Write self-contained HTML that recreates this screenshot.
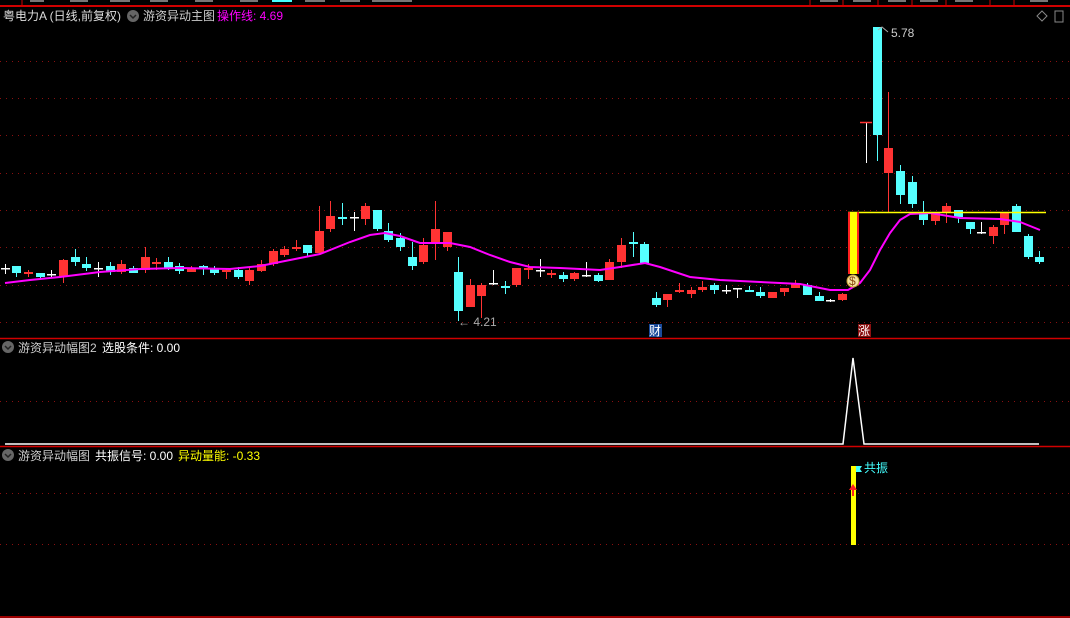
<!DOCTYPE html>
<html><head><meta charset="utf-8">
<style>
html,body{margin:0;padding:0;background:#000;width:1070px;height:618px;overflow:hidden}
svg{display:block}
text{font-family:"Liberation Sans","Noto Sans CJK SC",sans-serif;font-size:12px}
</style></head><body>
<svg id="s" width="1070" height="618" xmlns="http://www.w3.org/2000/svg">
<rect width="1070" height="618" fill="#000"/>
<g stroke="#8a1010" stroke-width="1" stroke-dasharray="1,5">
<line x1="0" y1="61.5" x2="1070" y2="61.5"/><line x1="0" y1="98.5" x2="1070" y2="98.5"/>
<line x1="0" y1="135.5" x2="1070" y2="135.5"/><line x1="0" y1="173.5" x2="1070" y2="173.5"/>
<line x1="0" y1="210.5" x2="1070" y2="210.5"/><line x1="0" y1="247.5" x2="1070" y2="247.5"/>
<line x1="0" y1="285.5" x2="1070" y2="285.5"/><line x1="0" y1="322.5" x2="1070" y2="322.5"/>
<line x1="0" y1="401.5" x2="1070" y2="401.5"/>
<line x1="0" y1="493.5" x2="1070" y2="493.5"/><line x1="0" y1="544.5" x2="1070" y2="544.5"/>
</g>
<line x1="0" y1="6" x2="1070" y2="6" stroke="#d00000" stroke-width="2"/>
<line x1="22" y1="0" x2="22" y2="6" stroke="#d00000"/>
<g stroke="#d00000"><line x1="810" y1="0" x2="810" y2="6"/><line x1="843" y1="0" x2="843" y2="6"/><line x1="878" y1="0" x2="878" y2="6"/><line x1="912" y1="0" x2="912" y2="6"/><line x1="946" y1="0" x2="946" y2="6"/><line x1="990" y1="0" x2="990" y2="6"/><line x1="1014" y1="0" x2="1014" y2="6"/></g>
<g fill="#777"><rect x="30" y="0" width="14" height="2"/><rect x="70" y="0" width="18" height="2"/><rect x="110" y="0" width="20" height="2"/><rect x="150" y="0" width="18" height="2"/><rect x="195" y="0" width="18" height="2"/><rect x="240" y="0" width="18" height="2"/><rect x="305" y="0" width="20" height="2"/><rect x="340" y="0" width="20" height="2"/><rect x="372" y="0" width="40" height="2"/><rect x="820" y="0" width="18" height="2"/><rect x="853" y="0" width="18" height="2"/><rect x="888" y="0" width="18" height="2"/><rect x="920" y="0" width="18" height="2"/><rect x="955" y="0" width="18" height="2"/><rect x="1030" y="0" width="18" height="2"/></g>
<rect x="272" y="0" width="20" height="2" fill="#4ff"/>
<text x="3" y="20" fill="#ddd">粤电力A (日线,前复权)</text>
<circle cx="133" cy="16" r="6" fill="#666"/><path d="M130 15l3 3 3-3" stroke="#222" fill="none" stroke-width="1.5"/>
<text x="143" y="20" fill="#ccc">游资异动主图</text>
<text x="217" y="20" fill="#ff00ff">操作线: 4.69</text>
<path d="M1042 11l5 5-5 5-5-5z" stroke="#888" fill="none"/>
<rect x="1055" y="11" width="8" height="11" stroke="#888" fill="none"/>
<g id="c"></g>
<polyline fill="none" stroke="#ff00ff" stroke-width="2" points="5,283 30,280 60,277 100,272 140,269 180,268 230,269 260,266 290,260 320,254 350,242 370,235 385,233 400,236 420,243 450,243 470,247 490,255 510,262 530,267 560,268 600,270 620,267 645,263 660,267 690,277 720,280 760,282 800,284 830,290 848,290 860,283 870,270 880,250 890,233 900,220 910,214 930,213 960,218 1000,219 1020,222 1040,230"/>
<line x1="848" y1="212.5" x2="1046" y2="212.5" stroke="#ffff00" stroke-width="1.5"/>
<rect x="848" y="212" width="11" height="62" fill="#ff2020"/><rect x="850" y="212" width="7" height="62" fill="#ffff00"/>
<circle cx="853" cy="281" r="6" fill="#f4e3a0" stroke="#c8a030"/><text x="849" y="285" font-size="9" fill="#8a4a10">$</text>
<text x="458" y="326" fill="#aaa">← 4.21</text>
<text x="891" y="37" fill="#ccc">5.78</text><path d="M878 30l4-3 6 5" stroke="#aaa" fill="none"/>
<rect x="649" y="324" width="13" height="13" fill="#1a4a9a"/><text x="649" y="335" fill="#fff">财</text>
<rect x="858" y="324" width="13" height="13" fill="#8a1010"/><text x="858" y="335" fill="#fff">涨</text>
<line x1="0" y1="338.5" x2="1070" y2="338.5" stroke="#d00000" stroke-width="1.5"/>
<circle cx="8" cy="347" r="6" fill="#666"/><path d="M5 346l3 3 3-3" stroke="#222" fill="none" stroke-width="1.5"/>
<text x="18" y="352" fill="#ccc">游资异动幅图2</text><text x="102" y="352" fill="#fff">选股条件: 0.00</text>
<polyline fill="none" stroke="#fff" stroke-width="1.5" points="5,444 843,444 853,358 864,444 1039,444"/>
<line x1="0" y1="446.5" x2="1070" y2="446.5" stroke="#d00000" stroke-width="1.5"/>
<circle cx="8" cy="455" r="6" fill="#666"/><path d="M5 454l3 3 3-3" stroke="#222" fill="none" stroke-width="1.5"/>
<text x="18" y="460" fill="#ccc">游资异动幅图</text><text x="95" y="460" fill="#fff">共振信号: 0.00</text><text x="178" y="460" fill="#ffff00">异动量能: -0.33</text>
<rect x="851" y="466" width="5" height="79" fill="#ffff00"/>
<path d="M853 484l-4 6h3v6h2v-6h3z" fill="#ff2020"/>
<path d="M856 466h6l-2 3 2 3h-6" fill="#4ff"/>
<text x="864" y="472" font-size="10" fill="#4ff">共振</text>
<line x1="0" y1="617" x2="1070" y2="617" stroke="#d00000" stroke-width="1.5"/>
</svg>
<script>
var d=[
[5,'w',268,268,264,274],[16,'c',266,273,266,277],[28,'r',272,274,270,277],[40,'c',273,277,273,278],[51,'w',274,274,270,278],
[63,'r',260,277,259,283],[75,'c',257,262,249,266],[86,'c',264,268,257,271],[98,'w',268,268,262,277],[110,'c',266,272,262,275],
[121,'r',264,272,260,274],[133,'c',268,273,266,273],[145,'r',257,270,247,273],[156,'r',262,264,258,270],[168,'c',262,268,257,270],
[179,'c',266,271,263,274],[191,'r',268,272,266,272],[203,'c',266,268,265,275],[214,'c',269,273,266,275],[226,'r',270,272,268,279],
[238,'c',270,277,267,279],[249,'r',270,281,267,285],[261,'r',264,271,260,272],[273,'r',251,264,249,266],[284,'r',249,255,246,257],
[296,'r',247,249,240,251],[307,'c',245,253,245,257],[319,'r',231,253,206,253],[330,'r',216,229,201,232],[342,'c',217,219,203,225],
[354,'w',217,217,212,231],[365,'r',206,219,203,225],[377,'c',210,229,210,231],[388,'c',231,240,223,242],[400,'c',238,247,233,251],
[412,'c',257,266,242,270],[423,'r',245,262,238,264],[435,'r',229,243,201,260],[447,'r',232,247,232,251],[458,'c',272,311,257,321],
[470,'r',285,307,279,307],[481,'r',285,296,283,318],[493,'w',283,283,270,285],[505,'c',286,288,281,294],[516,'r',268,285,268,287],
[528,'r',268,270,264,279],[540,'w',270,270,259,277],[551,'r',273,275,270,278],[563,'c',275,279,272,282],[574,'r',273,279,272,281],
[586,'w',275,275,262,277],[598,'c',275,281,273,282],[609,'r',262,280,259,280],[621,'r',245,262,238,268],[633,'c',242,244,232,257],
[644,'c',244,263,242,264],[656,'c',298,305,292,307],[667,'r',294,300,294,307],[679,'r',290,292,283,293],[691,'r',290,294,287,298],
[702,'r',287,290,281,292],[714,'c',285,290,283,294],[726,'w',290,290,285,294],[737,'w',288,288,288,298],[749,'c',290,292,286,292],
[760,'c',292,296,287,298],[772,'r',292,298,292,298],[784,'r',288,292,288,296],[795,'r',283,288,280,288],[807,'c',285,295,283,295],
[819,'c',296,301,292,301],[830,'w',300,300,299,302],[842,'r',294,300,293,301],
[877,'c',27,135,27,161],[888,'r',148,173,92,212],[900,'c',171,195,165,204],[912,'c',182,204,176,208],
[923,'c',214,220,201,225],[935,'r',213,221,213,225],[946,'r',206,213,203,223],[958,'c',210,217,210,223],[970,'c',222,229,222,234],
[981,'w',232,232,222,234],[993,'r',227,236,225,244],[1004,'r',213,225,213,234],[1016,'c',206,232,204,232],[1028,'c',236,257,234,259],[1039,'c',257,262,251,264]
];
var col={r:'#ff3333',c:'#55ffff',w:'#ffffff'},h='';
d.forEach(function(a){var x=a[0],c=col[a[1]];
h+='<line x1="'+(x+.5)+'" y1="'+a[4]+'" x2="'+(x+.5)+'" y2="'+a[5]+'" stroke="'+c+'"/>';
var hh=Math.max(a[3]-a[2],1);
h+='<rect x="'+(x-4)+'" y="'+a[2]+'" width="9" height="'+Math.max(hh,1.5)+'" fill="'+c+'"/>';});
h+='<line x1="866.5" y1="123" x2="866.5" y2="163" stroke="#fff"/><line x1="860" y1="122.5" x2="872" y2="122.5" stroke="#ff3333" stroke-width="1.5"/>';
document.getElementById('c').innerHTML=h;
</script>
</body></html>
